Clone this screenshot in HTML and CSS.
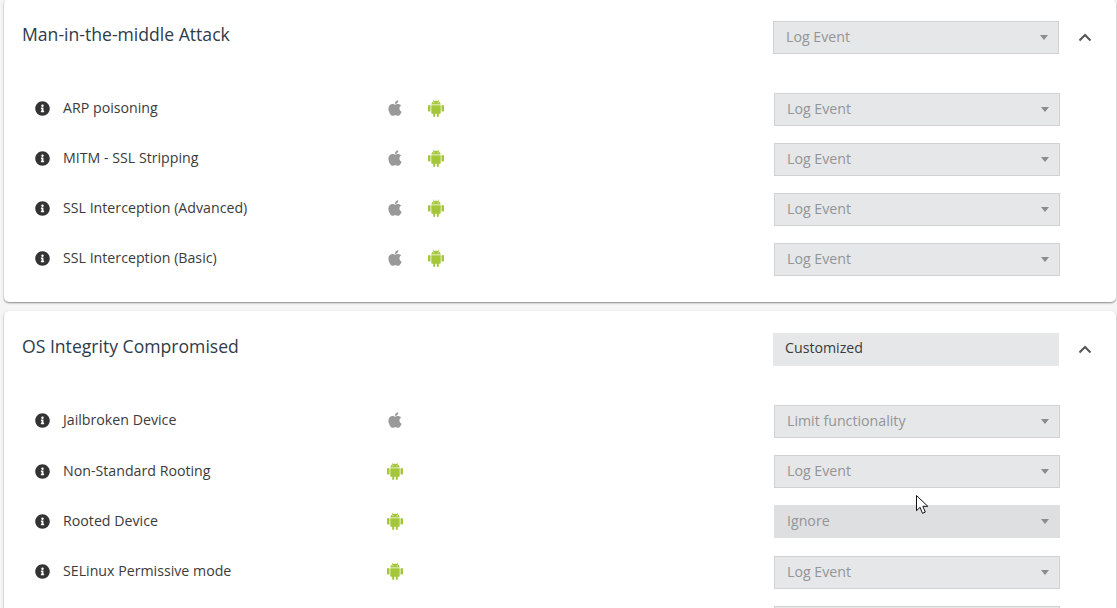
FILE: index.html
```html
<!DOCTYPE html>
<html lang="en">
<head>
    <meta charset="UTF-8">
    <title>Threat Policy</title>
    <link rel="stylesheet" href="styles.css">
</head>
<body>
    <svg class="icon-defs" aria-hidden="true">
        <symbol id="i-info" viewBox="0 0 512 512">
            <path d="M256 8C119 8 8 119.1 8 256c0 137 111 248 248 248s248-111 248-248C504 119.1 393 8 256 8zm0 110c23.2 0 42 18.8 42 42s-18.8 42-42 42-42-18.8-42-42 18.8-42 42-42zm56 254c0 6.6-5.4 12-12 12h-88c-6.6 0-12-5.4-12-12v-24c0-6.6 5.4-12 12-12h12v-64h-12c-6.6 0-12-5.4-12-12v-24c0-6.6 5.4-12 12-12h64c6.6 0 12 5.4 12 12v100h12c6.6 0 12 5.4 12 12v24z"/>
        </symbol>
        <symbol id="i-apple" viewBox="0 0 384 512">
            <path d="M318.7 268.7c-.2-36.7 16.4-64.4 50-84.8-18.8-26.9-47.2-41.7-84.7-44.6-35.5-2.8-74.3 20.7-88.5 20.7-15 0-49.4-19.7-76.4-19.7C63.3 141.2 4 184.8 4 273.5q0 39.3 14.4 81.2c12.8 36.7 59 126.7 107.2 125.2 25.2-.6 43-17.9 75.8-17.9 31.8 0 48.3 17.9 76.4 17.9 48.6-.7 90.4-82.5 102.6-119.3-65.2-30.7-61.7-90-61.7-91.9zm-56.6-164.2c27.3-32.4 24.8-61.9 24-72.5-24.1 1.4-52 16.4-67.9 34.9-17.5 19.8-27.8 44.3-25.6 71.9 26.1 2 49.9-11.4 69.5-34.3z"/>
        </symbol>
        <symbol id="i-android" viewBox="0 0 16 18">
            <path d="M3.3 5.6C3.5 3.9 4.4 2.8 5.5 2.2L4.7 .7l.4-.2.9 1.5C6.6 1.8 7.3 1.7 8 1.7s1.4.1 2 .3l.9-1.5.4.2-.8 1.5c1.1.6 2 1.7 2.2 3.4H3.3zM5.9 3.2a.5.5 0 1 0 0 1 .5.5 0 0 0 0-1zm4.2 0a.5.5 0 1 0 0 1 .5.5 0 0 0 0-1z" fill-rule="evenodd"/>
            <path d="M3.3 6.2h9.4v7.6c0 .6-.4 1-1 1h-.9v2.2a1 1 0 0 1-2 0v-2.2H7.2v2.2a1 1 0 0 1-2 0v-2.2h-.9c-.6 0-1-.4-1-1z"/>
            <rect x="0" y="6" width="2.5" height="6.6" rx="1.2"/>
            <rect x="13.5" y="6" width="2.5" height="6.6" rx="1.2"/>
        </symbol>
    </svg>

    <div class="page">
        <section class="card">
            <div class="card-header">
                <h2 class="card-title">Man-in-the-middle Attack</h2>
                <div class="select">Log Event<span class="caret"></span></div>
                <svg class="chevron" viewBox="0 0 14 9"><path d="M1.5 7.5 7 2l5.5 5.5"/></svg>
            </div>
            <div class="row">
                <svg class="info"><use href="#i-info"/></svg>
                <span class="row-name">ARP poisoning</span>
                <span class="os-list">
                    <svg class="os apple"><use href="#i-apple"/></svg>
                    <svg class="os android"><use href="#i-android"/></svg>
                </span>
                <div class="select">Log Event<span class="caret"></span></div>
            </div>
            <div class="row">
                <svg class="info"><use href="#i-info"/></svg>
                <span class="row-name">MITM - SSL Stripping</span>
                <span class="os-list">
                    <svg class="os apple"><use href="#i-apple"/></svg>
                    <svg class="os android"><use href="#i-android"/></svg>
                </span>
                <div class="select">Log Event<span class="caret"></span></div>
            </div>
            <div class="row">
                <svg class="info"><use href="#i-info"/></svg>
                <span class="row-name">SSL Interception (Advanced)</span>
                <span class="os-list">
                    <svg class="os apple"><use href="#i-apple"/></svg>
                    <svg class="os android"><use href="#i-android"/></svg>
                </span>
                <div class="select">Log Event<span class="caret"></span></div>
            </div>
            <div class="row">
                <svg class="info"><use href="#i-info"/></svg>
                <span class="row-name">SSL Interception (Basic)</span>
                <span class="os-list">
                    <svg class="os apple"><use href="#i-apple"/></svg>
                    <svg class="os android"><use href="#i-android"/></svg>
                </span>
                <div class="select">Log Event<span class="caret"></span></div>
            </div>
        </section>

        <section class="card">
            <div class="card-header">
                <h2 class="card-title">OS Integrity Compromised</h2>
                <div class="select select-plain">Customized</div>
                <svg class="chevron" viewBox="0 0 14 9"><path d="M1.5 7.5 7 2l5.5 5.5"/></svg>
            </div>
            <div class="row">
                <svg class="info"><use href="#i-info"/></svg>
                <span class="row-name">Jailbroken Device</span>
                <span class="os-list">
                    <svg class="os apple"><use href="#i-apple"/></svg>
                </span>
                <div class="select">Limit functionality<span class="caret"></span></div>
            </div>
            <div class="row">
                <svg class="info"><use href="#i-info"/></svg>
                <span class="row-name">Non-Standard Rooting</span>
                <span class="os-list">
                    <svg class="os android"><use href="#i-android"/></svg>
                </span>
                <div class="select">Log Event<span class="caret"></span></div>
            </div>
            <div class="row">
                <svg class="info"><use href="#i-info"/></svg>
                <span class="row-name">Rooted Device</span>
                <span class="os-list">
                    <svg class="os android"><use href="#i-android"/></svg>
                </span>
                <div class="select select-hover">Ignore<span class="caret"></span></div>
            </div>
            <div class="row">
                <svg class="info"><use href="#i-info"/></svg>
                <span class="row-name">SELinux Permissive mode</span>
                <span class="os-list">
                    <svg class="os android"><use href="#i-android"/></svg>
                </span>
                <div class="select">Log Event<span class="caret"></span></div>
            </div>
            <!-- next row is cut off by the window, only the top of its select shows -->
            <div class="row">
                <span class="os-list"></span>
                <div class="select"></div>
            </div>
        </section>
    </div>

    <!-- mouse pointer caught in the screenshot -->
    <svg class="cursor" viewBox="0 0 13 20">
        <path d="M.5.5v15.2l3.6-3.4 2.4 6 2.8-1.2-2.5-5.8h5z"/>
    </svg>
</body>
</html>
```

FILE: styles.css
```css
html, body {
    height: 100%;
    overflow: hidden;
}
body {
    background: #f5f5f5;
    font-family: "Open Sans", sans-serif;
    font-size: 14.2px;
    color: #3b3b3b;
    margin: 0;
}
.icon-defs {
    display: none;
}
.page {
    display: flex;
    flex-direction: column;
    gap: 8.98px;
    margin-top: -1.45px;
    padding: 0 1px 0 4px;
}
.card {
    background: #fff;
    border-radius: 5px;
    box-shadow: 0 1px 2px rgba(0, 0, 0, 0.45);
    padding-bottom: 17px;
}
.card-header {
    display: flex;
    align-items: center;
    height: 33px;
    padding: 22px 24px 23px 18px;
    margin-bottom: 7.4px;
}
.card-title {
    flex: 1;
    margin: 0 0 6px;
    font-size: 17.6px;
    font-weight: 400;
    color: #2f3b4a;
}
.card-header .select {
    margin-right: 19px;
}
.chevron {
    flex: none;
    width: 14px;
    height: 9px;
    fill: none;
    stroke: #555;
    stroke-width: 2;
}
.row {
    display: flex;
    align-items: center;
    height: 50.25px;
    padding: 0 56px 0 31px;
}
.info {
    flex: none;
    width: 15px;
    height: 15px;
    margin-right: 13px;
    margin-bottom: 2px;
    fill: #333;
}
.row-name {
    flex: none;
    width: 324px;
    margin-bottom: 4px;
}
.os-list {
    flex: 1;
    display: flex;
    align-items: center;
    gap: 25px;
}
.os {
    flex: none;
    height: 18px;
    margin-bottom: 3px;
}
.apple {
    width: 16px;
    fill: #999;
}
.android {
    width: 16px;
    fill: #a4c639;
}
.select {
    flex: none;
    position: relative;
    box-sizing: border-box;
    width: 286px;
    height: 33px;
    line-height: 29.6px;
    padding-left: 12px;
    background: #e6e7e8;
    border: 1px solid #d0d2d5;
    color: #939598;
}
.select-plain {
    border-color: #e6e7e8;
    color: #3b3b3b;
    padding-left: 11px;
    line-height: 27px;
}
.select-hover {
    background: #dedfe1;
    border-color: #dedfe1;
}
/* second card sits half a pixel lower, its rows round differently */
.card + .card .row-name {
    margin-bottom: 3px;
}
.card + .card .info {
    margin-bottom: 1px;
}
.card + .card .os {
    margin-bottom: 2px;
}
.card + .card .row .select {
    line-height: 30.6px;
}
.caret {
    position: absolute;
    top: 13px;
    right: 10px;
    border-top: 5px solid #8c8c8c;
    border-left: 4px solid transparent;
    border-right: 4px solid transparent;
}
.cursor {
    position: absolute;
    left: 916px;
    top: 495px;
    width: 13px;
    height: 20px;
    fill: #fff;
    stroke: #111;
    stroke-width: 1;
}
```
